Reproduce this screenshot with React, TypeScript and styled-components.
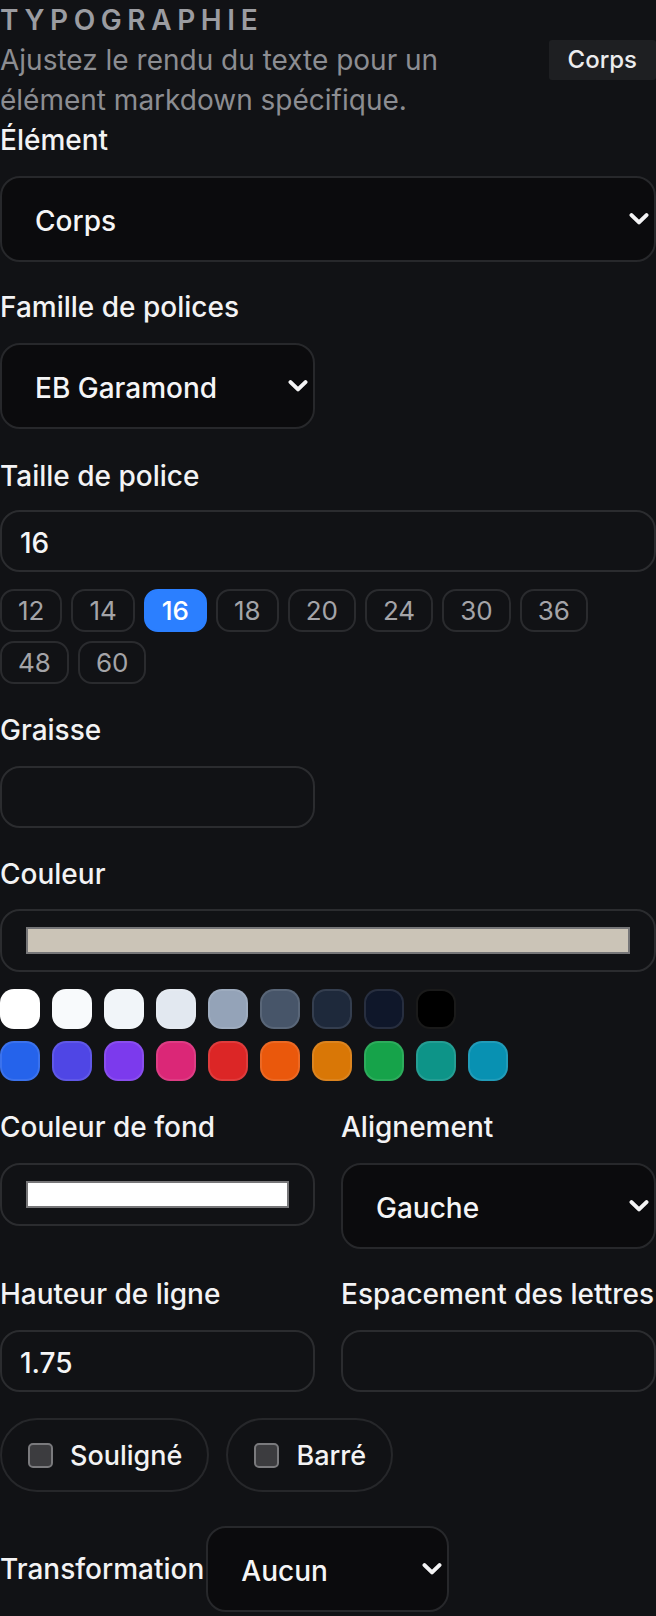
import styled, { createGlobalStyle } from "styled-components";

const GlobalStyle = createGlobalStyle`
  * { box-sizing: border-box; }
  html, body {
    margin: 0;
    padding: 0;
    background: #111215;
    overflow: hidden;
  }
  body {
    font-family: Inter, "Noto Sans", "Liberation Sans", sans-serif;
    color: #f2f2f3;
  }
`;

const SIZES = [12, 14, 16, 18, 20, 24, 30, 36, 48, 60];

const NEUTRALS = [
  "#ffffff",
  "#f8fafc",
  "#f1f5f9",
  "#e2e8f0",
  "#94a3b8",
  "#475569",
  "#1e293b",
  "#0f172a",
  "#000000",
];

const ACCENTS = [
  "#2563eb",
  "#4f46e5",
  "#7c3aed",
  "#db2777",
  "#dc2626",
  "#ea580c",
  "#d97706",
  "#16a34a",
  "#0d9488",
  "#0891b2",
];

function Chevron() {
  return (
    <svg width="20" height="13" viewBox="0 0 20 13" fill="none">
      <path
        d="M2.5 2.6 L10 9.9 L17.5 2.6"
        stroke="#f4f4f5"
        strokeWidth="4"
        strokeLinecap="round"
        strokeLinejoin="round"
      />
    </svg>
  );
}

function SelectBox(props: { value: string; width?: string }) {
  return (
    <SelectWrap $width={props.width}>
      <Select defaultValue={props.value}>
        <option>{props.value}</option>
      </Select>
      <ChevronSlot>
        <Chevron />
      </ChevronSlot>
    </SelectWrap>
  );
}

function App() {
  return (
    <>
      <GlobalStyle />
      <Panel>
        <Header>
          <Title>Typographie</Title>
          <DescRow>
            <Description>
              Ajustez le rendu du texte pour un élément markdown spécifique.
            </Description>
            <Badge>Corps</Badge>
          </DescRow>
        </Header>

        <Field $top="5px">
          <Label>Élément</Label>
          <SelectBox value="Corps" />
        </Field>

        <Field>
          <Label>Famille de polices</Label>
          <SelectBox value="EB Garamond" width="315px" />
        </Field>

        <Field $top="32px">
          <Label $gap="19px">Taille de police</Label>
          <TextInput defaultValue="16" />
          <ChipRow>
            {SIZES.map((size) => (
              <Chip key={size} $active={size === 16}>
                {size}
              </Chip>
            ))}
          </ChipRow>
        </Field>

        <Field $top="31px">
          <Label>Graisse</Label>
          <TextInput $width="315px" />
        </Field>

        <Field $top="31px">
          <Label $gap="20px">Couleur</Label>
          <ColorBox>
            <ColorBar $color="#cbc4b7" />
          </ColorBox>
          <SwatchGrid>
            <SwatchRow>
              {NEUTRALS.map((c) => (
                <Swatch key={c} $color={c} />
              ))}
            </SwatchRow>
            <SwatchRow>
              {ACCENTS.map((c) => (
                <Swatch key={c} $color={c} />
              ))}
            </SwatchRow>
          </SwatchGrid>
        </Field>

        <TwoCol>
          <Field $top="0">
            <Label>Couleur de fond</Label>
            <ColorBox>
              <ColorBar $color="#ffffff" />
            </ColorBox>
          </Field>
          <Field $top="0">
            <Label>Alignement</Label>
            <SelectBox value="Gauche" />
          </Field>
          <Field $top="0">
            <Label>Hauteur de ligne</Label>
            <TextInput defaultValue="1.75" />
          </Field>
          <Field $top="0">
            <Label>Espacement des lettres</Label>
            <TextInput />
          </Field>
        </TwoCol>

        <ToggleRow>
          <TogglePill>
            <Check type="checkbox" />
            Souligné
          </TogglePill>
          <TogglePill>
            <Check type="checkbox" />
            Barré
          </TogglePill>
        </ToggleRow>

        <InlineField>
          <InlineLabel>Transformation</InlineLabel>
          <SelectBox value="Aucun" width="243px" />
        </InlineField>
      </Panel>
    </>
  );
}
export default App;

const Panel = styled.div`
  width: 656px;
  display: flex;
  flex-direction: column;
`;

const Header = styled.div`
  display: flex;
  flex-direction: column;
`;

const Title = styled.div`
  font-size: 28px;
  line-height: 40px;
  font-weight: 600;
  letter-spacing: 0.2em;
  text-transform: uppercase;
  color: #9b9ca1;
`;

const DescRow = styled.div`
  display: flex;
  justify-content: space-between;
  align-items: flex-start;
`;

const Description = styled.p`
  margin: 0;
  max-width: 480px;
  font-size: 28px;
  line-height: 40px;
  color: #8c8d92;
`;

const Badge = styled.span`
  flex-shrink: 0;
  padding: 5px 19px;
  font-size: 24px;
  line-height: 30px;
  font-weight: 500;
  color: #ececee;
  background: #1e1f22;
  border-radius: 3px;
`;

const Field = styled.div<{ $top?: string }>`
  display: flex;
  flex-direction: column;
  margin-top: ${(p) => p.$top ?? "30px"};
`;

const Label = styled.label<{ $gap?: string }>`
  display: block;
  margin-bottom: ${(p) => p.$gap ?? "21px"};
  font-size: 28px;
  line-height: 30px;
  font-weight: 500;
  color: #f3f3f4;
  white-space: nowrap;
`;

const SelectWrap = styled.div<{ $width?: string }>`
  position: relative;
  width: ${(p) => p.$width ?? "100%"};
`;

const Select = styled.select`
  appearance: none;
  width: 100%;
  height: 86px;
  padding: 3px 44px 0 33px;
  font-family: inherit;
  font-size: 28px;
  line-height: 30px;
  font-weight: 500;
  color: #f5f5f6;
  background: #0b0b0d;
  border: 2px solid #27282b;
  border-radius: 20px;
  outline: none;
`;

const ChevronSlot = styled.span`
  position: absolute;
  right: 7px;
  top: 50%;
  transform: translateY(-50%);
  display: flex;
  pointer-events: none;
`;

const TextInput = styled.input<{ $width?: string }>`
  width: ${(p) => p.$width ?? "100%"};
  height: 62px;
  padding: 4px 18px 0;
  font-family: inherit;
  font-size: 28px;
  font-weight: 500;
  color: #f5f5f6;
  background: transparent;
  border: 2px solid #2b2c2f;
  border-radius: 20px;
  outline: none;
`;

const ChipRow = styled.div`
  display: flex;
  flex-wrap: wrap;
  gap: 9px;
  margin-top: 17px;
`;

const Chip = styled.button<{ $active?: boolean }>`
  height: 43px;
  padding: 0 16px;
  font-family: inherit;
  font-size: 26px;
  font-weight: ${(p) => (p.$active ? 500 : 400)};
  color: ${(p) => (p.$active ? "#ffffff" : "#a4a4a8")};
  background: ${(p) => (p.$active ? "#2b7fff" : "transparent")};
  border: 2px solid ${(p) => (p.$active ? "#2b7fff" : "#2a2b2e")};
  border-radius: 14px;
`;

const ColorBox = styled.div`
  display: flex;
  align-items: center;
  height: 63px;
  padding: 0 24px;
  border: 2px solid #2b2c2f;
  border-radius: 20px;
`;

const ColorBar = styled.div<{ $color: string }>`
  flex: 1;
  height: 27px;
  background: ${(p) => p.$color};
  border: 2px solid #767678;
`;

const SwatchGrid = styled.div`
  display: flex;
  flex-direction: column;
  gap: 12px;
  margin-top: 17px;
`;

const SwatchRow = styled.div`
  display: flex;
  gap: 12px;
`;

const Swatch = styled.button<{ $color: string }>`
  width: 40px;
  height: 40px;
  padding: 0;
  background: ${(p) => p.$color};
  border: 2px solid rgba(255, 255, 255, 0.1);
  border-radius: 14px;
`;

const TwoCol = styled.div`
  display: grid;
  grid-template-columns: 1fr 1fr;
  column-gap: 26px;
  row-gap: 30px;
  align-items: start;
  margin-top: 31px;
`;

const ToggleRow = styled.div`
  display: flex;
  gap: 17px;
  margin-top: 26px;
`;

const TogglePill = styled.label`
  display: inline-flex;
  align-items: center;
  gap: 17px;
  height: 74px;
  padding: 0 25px 0 26px;
  font-size: 27px;
  font-weight: 500;
  color: #f3f3f4;
  border: 2px solid #26272a;
  border-radius: 37px;
`;

const Check = styled.input`
  appearance: none;
  width: 25px;
  height: 25px;
  margin: 0;
  background: #3c3c3f;
  border: 2px solid #7a7a7d;
  border-radius: 5px;
`;

const InlineField = styled.div`
  display: flex;
  align-items: center;
  gap: 2px;
  margin-top: 34px;
`;

const InlineLabel = styled.span`
  font-size: 28px;
  line-height: 30px;
  font-weight: 500;
  color: #f3f3f4;
`;
